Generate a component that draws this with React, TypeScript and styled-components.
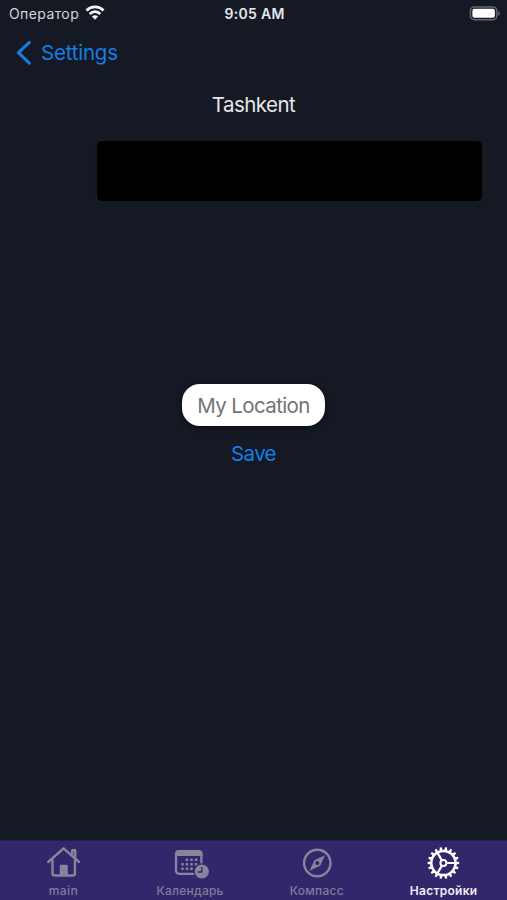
import React from "react";
import styled, { createGlobalStyle } from "styled-components";

const GlobalStyle = createGlobalStyle`
  * { box-sizing: border-box; }
  body { margin: 0; background: #151923; }
  button { border: 0; padding: 0; background: none; font: inherit; }
`;

const Screen = styled.div`
  display: flex;
  flex-direction: column;
  height: 900px;
  width: 507px;
  background: #151923;
  font-family: Inter, "Liberation Sans", sans-serif;
  overflow: hidden;
`;

const StatusBar = styled.header`
  display: grid;
  grid-template-columns: 1fr auto 1fr;
  align-items: center;
  height: 27px;
  padding: 0 7px 0 9px;
  color: #e4e6ea;
`;

const Carrier = styled.div`
  display: flex;
  align-items: center;
  gap: 6px;
  font-size: 14px;
  line-height: 27px;
  letter-spacing: 0.4px;
  color: #d3d5da;

  svg { margin-top: -2px; }
`;

const Clock = styled.time`
  font-size: 14px;
  font-weight: 600;
  line-height: 27px;
  letter-spacing: 0.3px;
`;

const BatterySlot = styled.div`
  display: flex;
  justify-content: flex-end;
`;

const NavBar = styled.nav`
  display: flex;
  height: 51px;
  padding-left: 16px;
`;

const BackButton = styled.button`
  display: flex;
  align-items: center;
  gap: 10px;
  color: #147ee6;
  font-size: 20.5px;
  letter-spacing: -0.22px;
`;

const Content = styled.main`
  display: flex;
  flex: 1;
  flex-direction: column;
  align-items: center;
`;

const City = styled.h1`
  margin: 14px 0 0;
  color: #e6e7ea;
  font-size: 20.5px;
  font-weight: 400;
  line-height: 26px;
  letter-spacing: -0.55px;
`;

const Field = styled.div`
  align-self: flex-end;
  width: 385px;
  height: 60px;
  margin: 23px 25px 0 0;
  border-radius: 5px;
  background: #000;
  box-shadow: 0 0 1px 1px #171c20;
`;

const LocationButton = styled.button`
  width: 143px;
  height: 42px;
  margin-top: 183px;
  border-radius: 18px;
  background: #fff;
  box-shadow: 0 1px 5px #080b12;
  color: #747474;
  font-size: 20.5px;
  letter-spacing: -0.62px;
`;

const SaveButton = styled.button`
  height: 30px;
  margin-top: 12px;
  color: #147ee6;
  font-size: 20.5px;
  letter-spacing: -0.65px;
`;

const TabBar = styled.footer`
  display: grid;
  grid-template-columns: repeat(4, 1fr);
  height: 60px;
  border-top: 1px solid #252047;
  background: #33276c;
`;

const Tab = styled.button<{ $active?: boolean }>`
  display: flex;
  flex-direction: column;
  align-items: center;
  padding-top: 4px;
  color: ${({ $active }) => ($active ? "#fff" : "#88849a")};
`;

const TabLabel = styled.span<{ $active?: boolean; $spacing: number }>`
  margin-top: 2px;
  color: ${({ $active }) => ($active ? "#f0edf8" : "#817c96")};
  font-size: 12px;
  font-weight: ${({ $active }) => ($active ? 600 : 500)};
  line-height: 15px;
  letter-spacing: ${({ $spacing }) => $spacing}px;
`;

const WifiIcon = () => (
  <svg width="20" height="15" viewBox="0 0 20 15" fill="none" stroke="#f4f4f6" strokeWidth="2.8">
    <path d="M1.5 5.4C6.2 .8 13.8 .8 18.5 5.4" />
    <path d="M4.7 8.9C7.8 6 12.2 6 15.3 8.9" />
    <path d="M10 14.8 6.9 11.6Q10 9.1 13.1 11.6Z" fill="#f4f4f6" stroke="none" />
  </svg>
);

const BatteryIcon = () => (
  <svg width="31" height="15" viewBox="0 0 31 15">
    <rect x="1.4" y=".9" width="26.5" height="12.8" rx="4" fill="none" stroke="#656871" strokeWidth="1.5" />
    <rect x="3.4" y="2.8" width="22.5" height="9" rx="2" fill="#fff" />
    <path d="M29.2 5v4.8q1.6-.8 1.6-2.4T29.2 5Z" fill="#656871" />
  </svg>
);

const ChevronIcon = () => (
  <svg width="15" height="24" viewBox="0 0 15 24">
    <path d="M13.3 1.3 2.4 11.7 13.3 22.1" fill="none" stroke="#147ee6" strokeWidth="3" strokeLinecap="round" strokeLinejoin="round" />
  </svg>
);

const HomeIcon = () => (
  <svg width="36" height="36" viewBox="0 0 36 36" fill="none" stroke="currentColor" strokeWidth="2.4" strokeLinecap="round" strokeLinejoin="round">
    <path d="M3.2 17 18.6 3.3 34 17" />
    <path d="M27.2 10.2V5.2h3v8" />
    <path d="M7.5 15.5v13q0 2 2 2h18.4q2 0 2-2v-13" />
    <path d="M16 29.5V21h5.6v8.5" fill="currentColor" />
  </svg>
);

const calendarDots: [number, number][] = [
  [16, 14.7], [20.5, 14.7], [25, 14.7],
  [11.5, 19.2], [16, 19.2], [20.5, 19.2], [25, 19.2],
  [11.5, 23.7], [16, 23.7], [20.5, 23.7],
];

const CalendarIcon = () => (
  <svg width="38" height="36" viewBox="0 0 38 36">
    <rect x="5" y="6.2" width="25.4" height="22.7" rx="3.3" fill="none" stroke="currentColor" strokeWidth="2.3" />
    <path d="M4 11V8.7Q4 5.1 7.7 5.1h20Q31.5 5.1 31.5 8.7V11Z" fill="currentColor" />
    {calendarDots.map(([x, y]) => (
      <rect key={`${x}-${y}`} x={x - 1.25} y={y - 1.25} width="2.5" height="2.5" rx=".5" fill="currentColor" />
    ))}
    <circle cx="30.8" cy="26.5" r="7.7" fill="currentColor" stroke="#33276c" strokeWidth="1.2" />
    <path d="M30.8 22v5h-4.1" fill="none" stroke="#33276c" strokeWidth="1.4" />
  </svg>
);

const CompassIcon = () => (
  <svg width="36" height="36" viewBox="0 0 36 36">
    <circle cx="18.3" cy="18" r="13.2" fill="none" stroke="currentColor" strokeWidth="2.4" />
    <path fillRule="evenodd" fill="currentColor" d="M26 10.3 21.2 20.8 10.6 25.7 15.4 15.2ZM18.3 15.9a2.1 2.1 0 1 0 0 4.2 2.1 2.1 0 0 0 0-4.2Z" />
  </svg>
);

const gearTeeth = Array.from({ length: 18 }, (_, index) => index * 20);

const GearIcon = () => (
  <svg width="36" height="36" viewBox="0 0 36 36" fill="none" stroke="currentColor">
    <g transform="translate(-.6 0)">
      <circle cx="18" cy="18" r="12.1" strokeWidth="2.5" />
      {gearTeeth.map((angle) => (
        <path key={angle} d="M16.5 5.5 17 2.2h2l.5 3.3Z" fill="currentColor" stroke="none" transform={`rotate(${angle + 10} 18 18)`} />
      ))}
      <circle cx="18" cy="18" r="3" strokeWidth="2" />
      <path d="M21 18h9M16.5 15.4 11.7 7.1M16.5 20.6l-4.8 8.3" strokeWidth="2.2" />
    </g>
  </svg>
);

const tabs = [
  { label: "main", spacing: 0.4, Icon: HomeIcon },
  { label: "Календарь", spacing: 0.22, Icon: CalendarIcon },
  { label: "Компасс", spacing: 0.3, Icon: CompassIcon },
  { label: "Настройки", spacing: 0.27, Icon: GearIcon, active: true },
];

export default function App() {
  return (
    <>
      <GlobalStyle />
      <Screen>
        <StatusBar>
          <Carrier>Оператор<WifiIcon /></Carrier>
          <Clock>9:05 AM</Clock>
          <BatterySlot><BatteryIcon /></BatterySlot>
        </StatusBar>
        <NavBar>
          <BackButton><ChevronIcon />Settings</BackButton>
        </NavBar>
        <Content>
          <City>Tashkent</City>
          <Field />
          <LocationButton>My Location</LocationButton>
          <SaveButton>Save</SaveButton>
        </Content>
        <TabBar>
          {tabs.map(({ label, spacing, Icon, active }) => (
            <Tab key={label} $active={active}>
              <Icon />
              <TabLabel $active={active} $spacing={spacing}>{label}</TabLabel>
            </Tab>
          ))}
        </TabBar>
      </Screen>
    </>
  );
}
